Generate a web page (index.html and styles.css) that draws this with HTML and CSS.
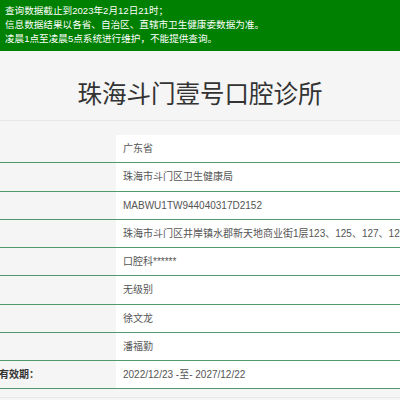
FILE: index.html
```html
<!DOCTYPE html>
<html lang="zh-CN">
<head>
<meta charset="utf-8">
<title>查询结果</title>
<link rel="stylesheet" href="styles.css">
</head>
<body>
<div class="notice">
  <p>查询数据截止到2023年2月12日21时；</p>
  <p>信息数据结果以各省、自治区、直辖市卫生健康委数据为准。</p>
  <p>凌晨1点至凌晨5点系统进行维护，不能提供查询。</p>
</div>
<div class="main">
  <h1 class="title">珠海斗门壹号口腔诊所</h1>
  <table class="info">
    <tr><th></th><td>广东省</td></tr>
    <tr><th></th><td>珠海市斗门区卫生健康局</td></tr>
    <tr><th></th><td>MABWU1TW944040317D2152</td></tr>
    <tr><th></th><td>珠海市斗门区井岸镇水郡新天地商业街1层123、125、127、129号</td></tr>
    <tr><th></th><td>口腔科******</td></tr>
    <tr><th></th><td>无级别</td></tr>
    <tr><th></th><td>徐文龙</td></tr>
    <tr><th></th><td>潘福勤</td></tr>
    <tr><th>证书有效期：</th><td>2022/12/23 -至- 2027/12/22</td></tr>
  </table>
  <div class="foot"></div>
</div>
</body>
</html>
```

FILE: styles.css
```css
html, body {
  margin: 0;
  padding: 0;
  background: #f5f5f5;
  font-family: "Liberation Sans", "Noto Sans CJK SC", sans-serif;
  overflow: hidden;
}

.notice {
  background: #008000;
  color: #ffffff;
  font-size: 9.6px;
  line-height: 14px;
  padding: 4px 5px 5px;
}

.notice p {
  margin: 0;
  white-space: nowrap;
}

.main {
  background: #f5f5f5;
}

.title {
  margin: 0;
  padding: 27px 0 12px;
  text-align: center;
  font-size: 24.5px;
  line-height: 30px;
  font-weight: normal;
  color: #333333;
  border-bottom: 1px solid #e8e8e8;
  font-family: "Noto Sans CJK SC", sans-serif;
}

.info {
  margin: 14px 0 0 -21px;
  width: calc(100% + 21px);
  border-collapse: collapse;
  font-size: 10px;
  line-height: 17.25px;
  table-layout: fixed;
}

.info th {
  width: 137px;
  padding: 5px 0;
  text-align: left;
  font-weight: bold;
  color: #333333;
  background: #f5f5f5;
  border-bottom: 1px solid #4f9a6b;
  white-space: nowrap;
}

.info td {
  padding: 5px 7px;
  color: #555555;
  background: #ffffff;
  border-bottom: 1px solid #4f9a6b;
  white-space: nowrap;
  overflow: hidden;
}

.foot {
  margin-top: 8px;
  border-top: 1px solid #e6e6e6;
  height: 10px;
}
```
